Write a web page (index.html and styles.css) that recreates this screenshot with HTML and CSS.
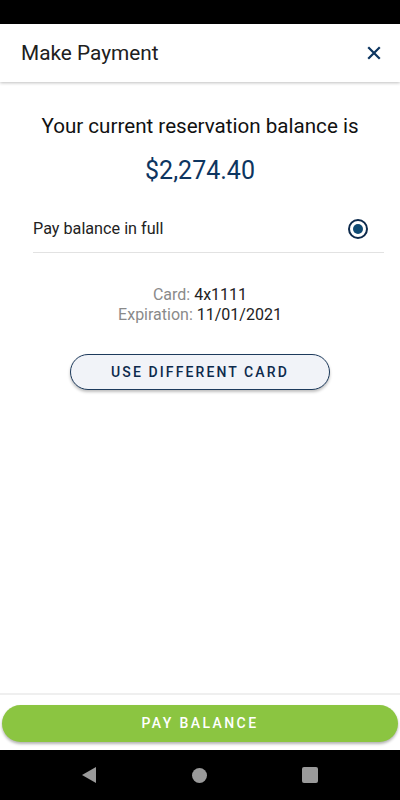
FILE: index.html
```html
<!DOCTYPE html>
<html lang="en">
<head>
  <meta charset="UTF-8">
  <meta name="viewport" content="width=device-width, initial-scale=1.0">
  <title>Make Payment</title>
  <link rel="stylesheet" href="styles.css">
</head>
<body>
  <div class="status-bar"></div>

  <!-- Header -->
  <header class="header">
    <h1>Make Payment</h1>
    <button class="close" aria-label="Close">
      <svg width="14" height="14" viewBox="0 0 14 14">
        <path d="M2 2L12 12M12 2L2 12" stroke="#0d3560" stroke-width="2.2" stroke-linecap="square"/>
      </svg>
    </button>
  </header>

  <main class="content">
    <h2 class="balance-label">Your current reservation balance is</h2>
    <div class="balance">$2,274.40</div>

    <div class="option">
      <span>Pay balance in full</span>
      <span class="radio"><span class="radio-dot"></span></span>
    </div>

    <div class="card-info">
      <div><span class="muted">Card:</span> 4x1111</div>
      <div><span class="muted">Expiration:</span> 11/01/2021</div>
    </div>

    <button class="btn-outline">USE DIFFERENT CARD</button>
  </main>

  <footer class="footer">
    <button class="btn-pay">PAY BALANCE</button>
  </footer>

  <nav class="nav-bar">
    <span class="nav-back"></span>
    <span class="nav-home"></span>
    <span class="nav-recent"></span>
  </nav>
</body>
</html>
```

FILE: styles.css
```css
* {
  box-sizing: border-box;
}
html, body {
  height: 100%;
}
body {
  margin: 0;
  font-family: Roboto, "Liberation Sans", sans-serif;
  color: #1f1f1f;
  background: #fff;
  display: flex;
  flex-direction: column;
}
.status-bar {
  height: 24px;
  background: #000;
  flex-shrink: 0;
}
.header {
  height: 58px;
  display: flex;
  align-items: center;
  justify-content: space-between;
  padding: 0 16px 0 21px;
  box-shadow: 0 1px 3px rgba(0, 0, 0, 0.25);
  position: relative;
  flex-shrink: 0;
}
.header h1 {
  margin: 0;
  font-size: 20.8px;
  font-weight: 400;
  color: #202020;
}
.close {
  border: none;
  background: none;
  padding: 0;
  width: 20px;
  height: 20px;
  display: flex;
  align-items: center;
  justify-content: center;
}
.content {
  flex: 1;
  display: flex;
  flex-direction: column;
  align-items: center;
  padding: 32px 16px 0 33px;
}
.balance-label {
  margin: 0;
  font-size: 20.6px;
  font-weight: 400;
  color: #111;
  padding-right: 17px;
}
.balance {
  margin-top: 18px;
  font-size: 25px;
  color: #0d3560;
  padding-right: 17px;
}
.option {
  align-self: stretch;
  display: flex;
  align-items: center;
  justify-content: space-between;
  margin-top: 19px;
  height: 49px;
  padding-top: 1px;
  padding-right: 16px;
  border-bottom: 1px solid #e2e2e2;
  font-size: 16.2px;
  color: #222;
}
.radio {
  width: 20px;
  height: 20px;
  border: 2px solid #0d2a4c;
  border-radius: 50%;
  display: flex;
  align-items: center;
  justify-content: center;
}
.radio-dot {
  width: 10px;
  height: 10px;
  border-radius: 50%;
  background: #0f4a73;
}
.card-info {
  margin-top: 32px;
  text-align: center;
  font-size: 16px;
  line-height: 20px;
  color: #222;
  padding-right: 17px;
}
.muted {
  color: #8a8a8a;
}
.btn-outline {
  margin-top: 29px;
  margin-right: 17px;
  width: 260px;
  height: 36px;
  border: 1px solid #1d3a5c;
  border-radius: 18px;
  background: #f1f3f8;
  color: #0d2a4c;
  font-family: Roboto, "Liberation Sans", sans-serif;
  font-size: 14px;
  font-weight: 500;
  letter-spacing: 2.1px;
  box-shadow: 0 2px 3px rgba(0, 0, 0, 0.25);
}
.footer {
  border-top: 2px solid #efefef;
  padding: 10px 2px 8px;
  flex-shrink: 0;
}
.btn-pay {
  width: 100%;
  height: 37px;
  border: none;
  border-radius: 19px;
  background: #8bc541;
  color: #fff;
  font-family: Roboto, "Liberation Sans", sans-serif;
  font-size: 14px;
  font-weight: 500;
  letter-spacing: 2.4px;
  padding-bottom: 2px;
  box-shadow: 0 2px 3px rgba(0, 0, 0, 0.3);
}
.nav-bar {
  height: 50px;
  background: #000;
  display: flex;
  align-items: center;
  justify-content: space-between;
  padding: 0 82px 0 82px;
  flex-shrink: 0;
}
.nav-back {
  width: 0;
  height: 0;
  border-top: 8px solid transparent;
  border-bottom: 8px solid transparent;
  border-right: 14px solid #9a9a9a;
}
.nav-home {
  width: 15px;
  height: 15px;
  border-radius: 50%;
  background: #9a9a9a;
}
.nav-recent {
  width: 16px;
  height: 16px;
  border-radius: 2px;
  background: #9a9a9a;
}
```
